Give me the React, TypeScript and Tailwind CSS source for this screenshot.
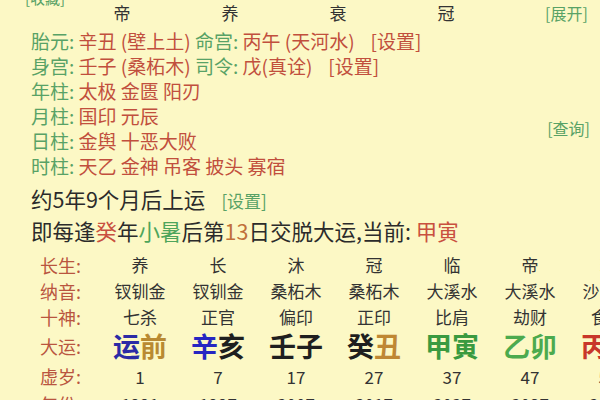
import React from "react"

const GREEN = "text-[#58a266]"
const RED = "text-[#c14f3d]"

type Cell = { text: string; color: string }

const changSheng = ["养", "长", "沐", "冠", "临", "帝", "衰"]
const naYin = ["钗钏金", "钗钏金", "桑柘木", "桑柘木", "大溪水", "大溪水", "沙中土"]
const shiShen = ["七杀", "正官", "偏印", "正印", "比肩", "劫财", "食神"]
const xuSui = ["1", "7", "17", "27", "37", "47", "57"]
const years = ["1991", "1997", "2007", "2017", "2027", "2037", "2047"]

// each luck pillar: two characters with their own colour
const daYun: Cell[][] = [
  [{ text: "运", color: "text-[#2b2ba6]" }, { text: "前", color: "text-[#b98a31]" }],
  [{ text: "辛", color: "text-[#2626c2]" }, { text: "亥", color: "text-[#1f1f1f]" }],
  [{ text: "壬", color: "text-[#1f1f1f]" }, { text: "子", color: "text-[#1f1f1f]" }],
  [{ text: "癸", color: "text-[#1f1f1f]" }, { text: "丑", color: "text-[#bf8733]" }],
  [{ text: "甲", color: "text-[#3a9a40]" }, { text: "寅", color: "text-[#3a9a40]" }],
  [{ text: "乙", color: "text-[#4caa4e]" }, { text: "卯", color: "text-[#4caa4e]" }],
  [{ text: "丙", color: "text-[#c8372a]" }, { text: "辰", color: "text-[#c8372a]" }],
]

function ShenSha({ label, items }: { label: string; items: string }) {
  return (
    <div className="h-[25px] leading-[25px] whitespace-nowrap">
      <span className={GREEN}>{label}: </span>
      <span className={RED}>{items}</span>
    </div>
  )
}

function TableRow({
  label,
  values,
  className,
}: {
  label: string
  values: string[]
  className: string
}) {
  return (
    <div className={`flex items-center ${className}`}>
      <div className="w-[61px] shrink-0 text-[18px] text-[#b9553f]">{label}:</div>
      {values.map((v, i) => (
        <div key={i} className="w-[78px] shrink-0 text-center text-[17px] text-[#333]">
          {v}
        </div>
      ))}
    </div>
  )
}

export default function App() {
  return (
    <div
      className="w-[600px] h-[400px] overflow-hidden bg-[#fcf8c5] text-[#2b2b2b]"
      style={{ fontFamily: '"Noto Sans CJK SC", "Noto Sans", sans-serif' }}
    >
      {/* cut-off top line */}
      <div className={`-mt-[11px] -mb-[7px] h-[18px] leading-[18px] pl-[25px] text-[15px] ${GREEN}`}>
        [收藏]
      </div>

      <div className="flex items-center h-[26px] text-[17px] whitespace-nowrap">
        <div className="ml-[68px] flex">
          {["帝", "养", "衰", "冠"].map((c) => (
            <span key={c} className="w-[108px] text-center text-[#333]">
              {c}
            </span>
          ))}
        </div>
        <span className={`ml-[45px] text-[16px] ${GREEN}`}>[展开]</span>
      </div>

      <div className="mt-[2px] pl-[31px] text-[19px]">
        <div className="h-[25px] leading-[25px] whitespace-nowrap">
          <span className={GREEN}>胎元: </span>
          <span className={RED}>辛丑 (壁上土) </span>
          <span className={GREEN}>命宫: </span>
          <span className={RED}>丙午 (天河水)</span>
          <span className={`ml-[16px] ${RED}`}>[设置]</span>
        </div>
        <div className="h-[25px] leading-[25px] whitespace-nowrap">
          <span className={GREEN}>身宫: </span>
          <span className={RED}>壬子 (桑柘木) </span>
          <span className={GREEN}>司令: </span>
          <span className={RED}>戊(真诠)</span>
          <span className={`ml-[16px] ${RED}`}>[设置]</span>
        </div>
        <ShenSha label="年柱" items="太极 金匮 阳刃" />
        <ShenSha label="月柱" items="国印 元辰" />
        <div className="flex items-start pr-[10px]">
          <ShenSha label="日柱" items="金舆 十恶大败" />
          <span className={`ml-auto relative -top-[12px] text-[16px] leading-[25px] ${GREEN}`}>[查询]</span>
        </div>
        <ShenSha label="时柱" items="天乙 金神 吊客 披头 寡宿" />
      </div>

      <div className="mt-[5px] pl-[31px] text-[21.5px]">
        <div className="h-[32px] leading-[32px] whitespace-nowrap">
          约5年9个月后上运
          <span className={`ml-[16px] text-[17px] ${GREEN}`}>[设置]</span>
        </div>
        <div className="h-[32px] leading-[32px] whitespace-nowrap">
          即每逢<span className="text-[#c9503f]">癸</span>年
          <span className="text-[#4ea55b]">小暑</span>后第
          <span className="text-[#c0703a]">13</span>日交脱大运,当前:{" "}
          <span className="text-[#c9503f]">甲寅</span>
        </div>
      </div>

      <div className="mt-[5px] pl-[40px] whitespace-nowrap">
        <TableRow label="长生" values={changSheng} className="h-[26px]" />
        <TableRow label="纳音" values={naYin} className="h-[26px]" />
        <TableRow label="十神" values={shiShen} className="h-[26px]" />
        <div className="flex items-center h-[32px]">
          <div className="w-[61px] shrink-0 text-[18px] text-[#b9553f]">大运:</div>
          {daYun.map((pair, i) => (
            <div key={i} className="w-[78px] shrink-0 text-center text-[27px] font-bold leading-[32px]">
              {pair.map((c, j) => (
                <span key={j} className={c.color}>
                  {c.text}
                </span>
              ))}
            </div>
          ))}
        </div>
        <TableRow label="虚岁" values={xuSui} className="h-[29px]" />
        <TableRow label="年份" values={years} className="h-[26px]" />
      </div>
    </div>
  )
}
